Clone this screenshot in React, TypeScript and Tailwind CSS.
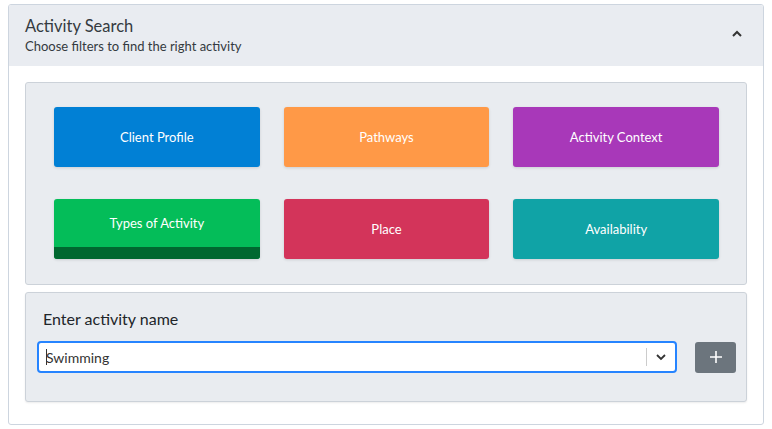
import React from "react";

const buttons = [
  { label: "Client Profile", bg: "bg-[#0180d5]" },
  { label: "Pathways", bg: "bg-[#ff9947]" },
  { label: "Activity Context", bg: "bg-[#a838b9]" },
  { label: "Types of Activity", bg: "bg-[#04bd59]", active: true },
  { label: "Place", bg: "bg-[#d3345a]" },
  { label: "Availability", bg: "bg-[#10a3a6]" },
];

export default function App() {
  return (
    <div className="w-[772px] h-[429px] bg-white pt-[4px] px-[8px] font-['Lato','Noto_Sans',sans-serif] text-[#212529]">
      <div className="border border-[#cdd5df] rounded-[3px] h-[421px] flex flex-col overflow-hidden">
        <div className="bg-[#e9ecf1] h-[61px] flex items-center justify-between pl-[16px] pr-[20px] shrink-0">
          <div className="flex flex-col">
            <div className="text-[16.5px] leading-[20px] text-[#343a40]">Activity Search</div>
            <div className="text-[13px] leading-[18px] mt-[1px] text-[#343a40]">Choose filters to find the right activity</div>
          </div>
          <svg width="12" height="8" viewBox="0 0 12 8" className="mt-[-4px]">
            <path d="M2 6 L6 2 L10 6" fill="none" stroke="#333" strokeWidth="2" />
          </svg>
        </div>
        <div className="flex flex-col px-[16px] pt-[16px] gap-[7px]">
          <div className="bg-[#e9ecf0] border border-[#ccd2d9] rounded-[3px] pt-[24px] pb-[25px] pl-[28px] pr-[27px] grid grid-cols-3 gap-x-[24px] gap-y-[32px]">
            {buttons.map((b) => (
              <div
                key={b.label}
                className={`${b.bg} h-[60px] rounded-[3px] shadow-[0_1px_3px_rgba(0,0,0,0.12)] text-white text-[13px] flex flex-col overflow-hidden`}
              >
                {b.active ? (
                  <>
                    <div className="flex-1 flex items-center justify-center pt-[2px]">{b.label}</div>
                    <div className="h-[12px] bg-[#006830]" />
                  </>
                ) : (
                  <div className="flex-1 flex items-center justify-center pt-[1px]">{b.label}</div>
                )}
              </div>
            ))}
          </div>
          <div className="bg-[#e9ecf0] border border-[#ccd2d9] rounded-[3px] shadow-[0_1px_2px_rgba(0,0,0,0.08)] h-[110px] pt-[16px] pl-[11px] pr-[10px]">
            <div className="text-[16px] leading-[20px] pl-[6px] text-[#212529]">Enter activity name</div>
            <div className="flex items-center mt-[12px] gap-[18px]">
              <div className="flex-1 h-[32px] bg-white border-2 border-[#2684ff] rounded-[4px] flex items-center">
                <div className="flex-1 pl-[7px] text-[14px] flex items-center text-[#333]">
                  <span className="w-px h-[16px] bg-[#333] mr-[-1px]" />
                  Swimming
                </div>
                <div className="w-px h-[18px] bg-[#ccc]" />
                <div className="w-[28px] flex items-center justify-center">
                  <svg width="12" height="8" viewBox="0 0 12 8">
                    <path d="M2 2 L6 6 L10 2" fill="none" stroke="#333" strokeWidth="1.8" />
                  </svg>
                </div>
              </div>
              <div className="w-[41px] h-[31px] bg-[#6c757d] rounded-[3px] flex items-center justify-center">
                <svg width="14" height="14" viewBox="0 0 14 14">
                  <path d="M7 1 V13 M1 7 H13" stroke="white" strokeWidth="1.6" />
                </svg>
              </div>
            </div>
          </div>
        </div>
      </div>
    </div>
  );
}
